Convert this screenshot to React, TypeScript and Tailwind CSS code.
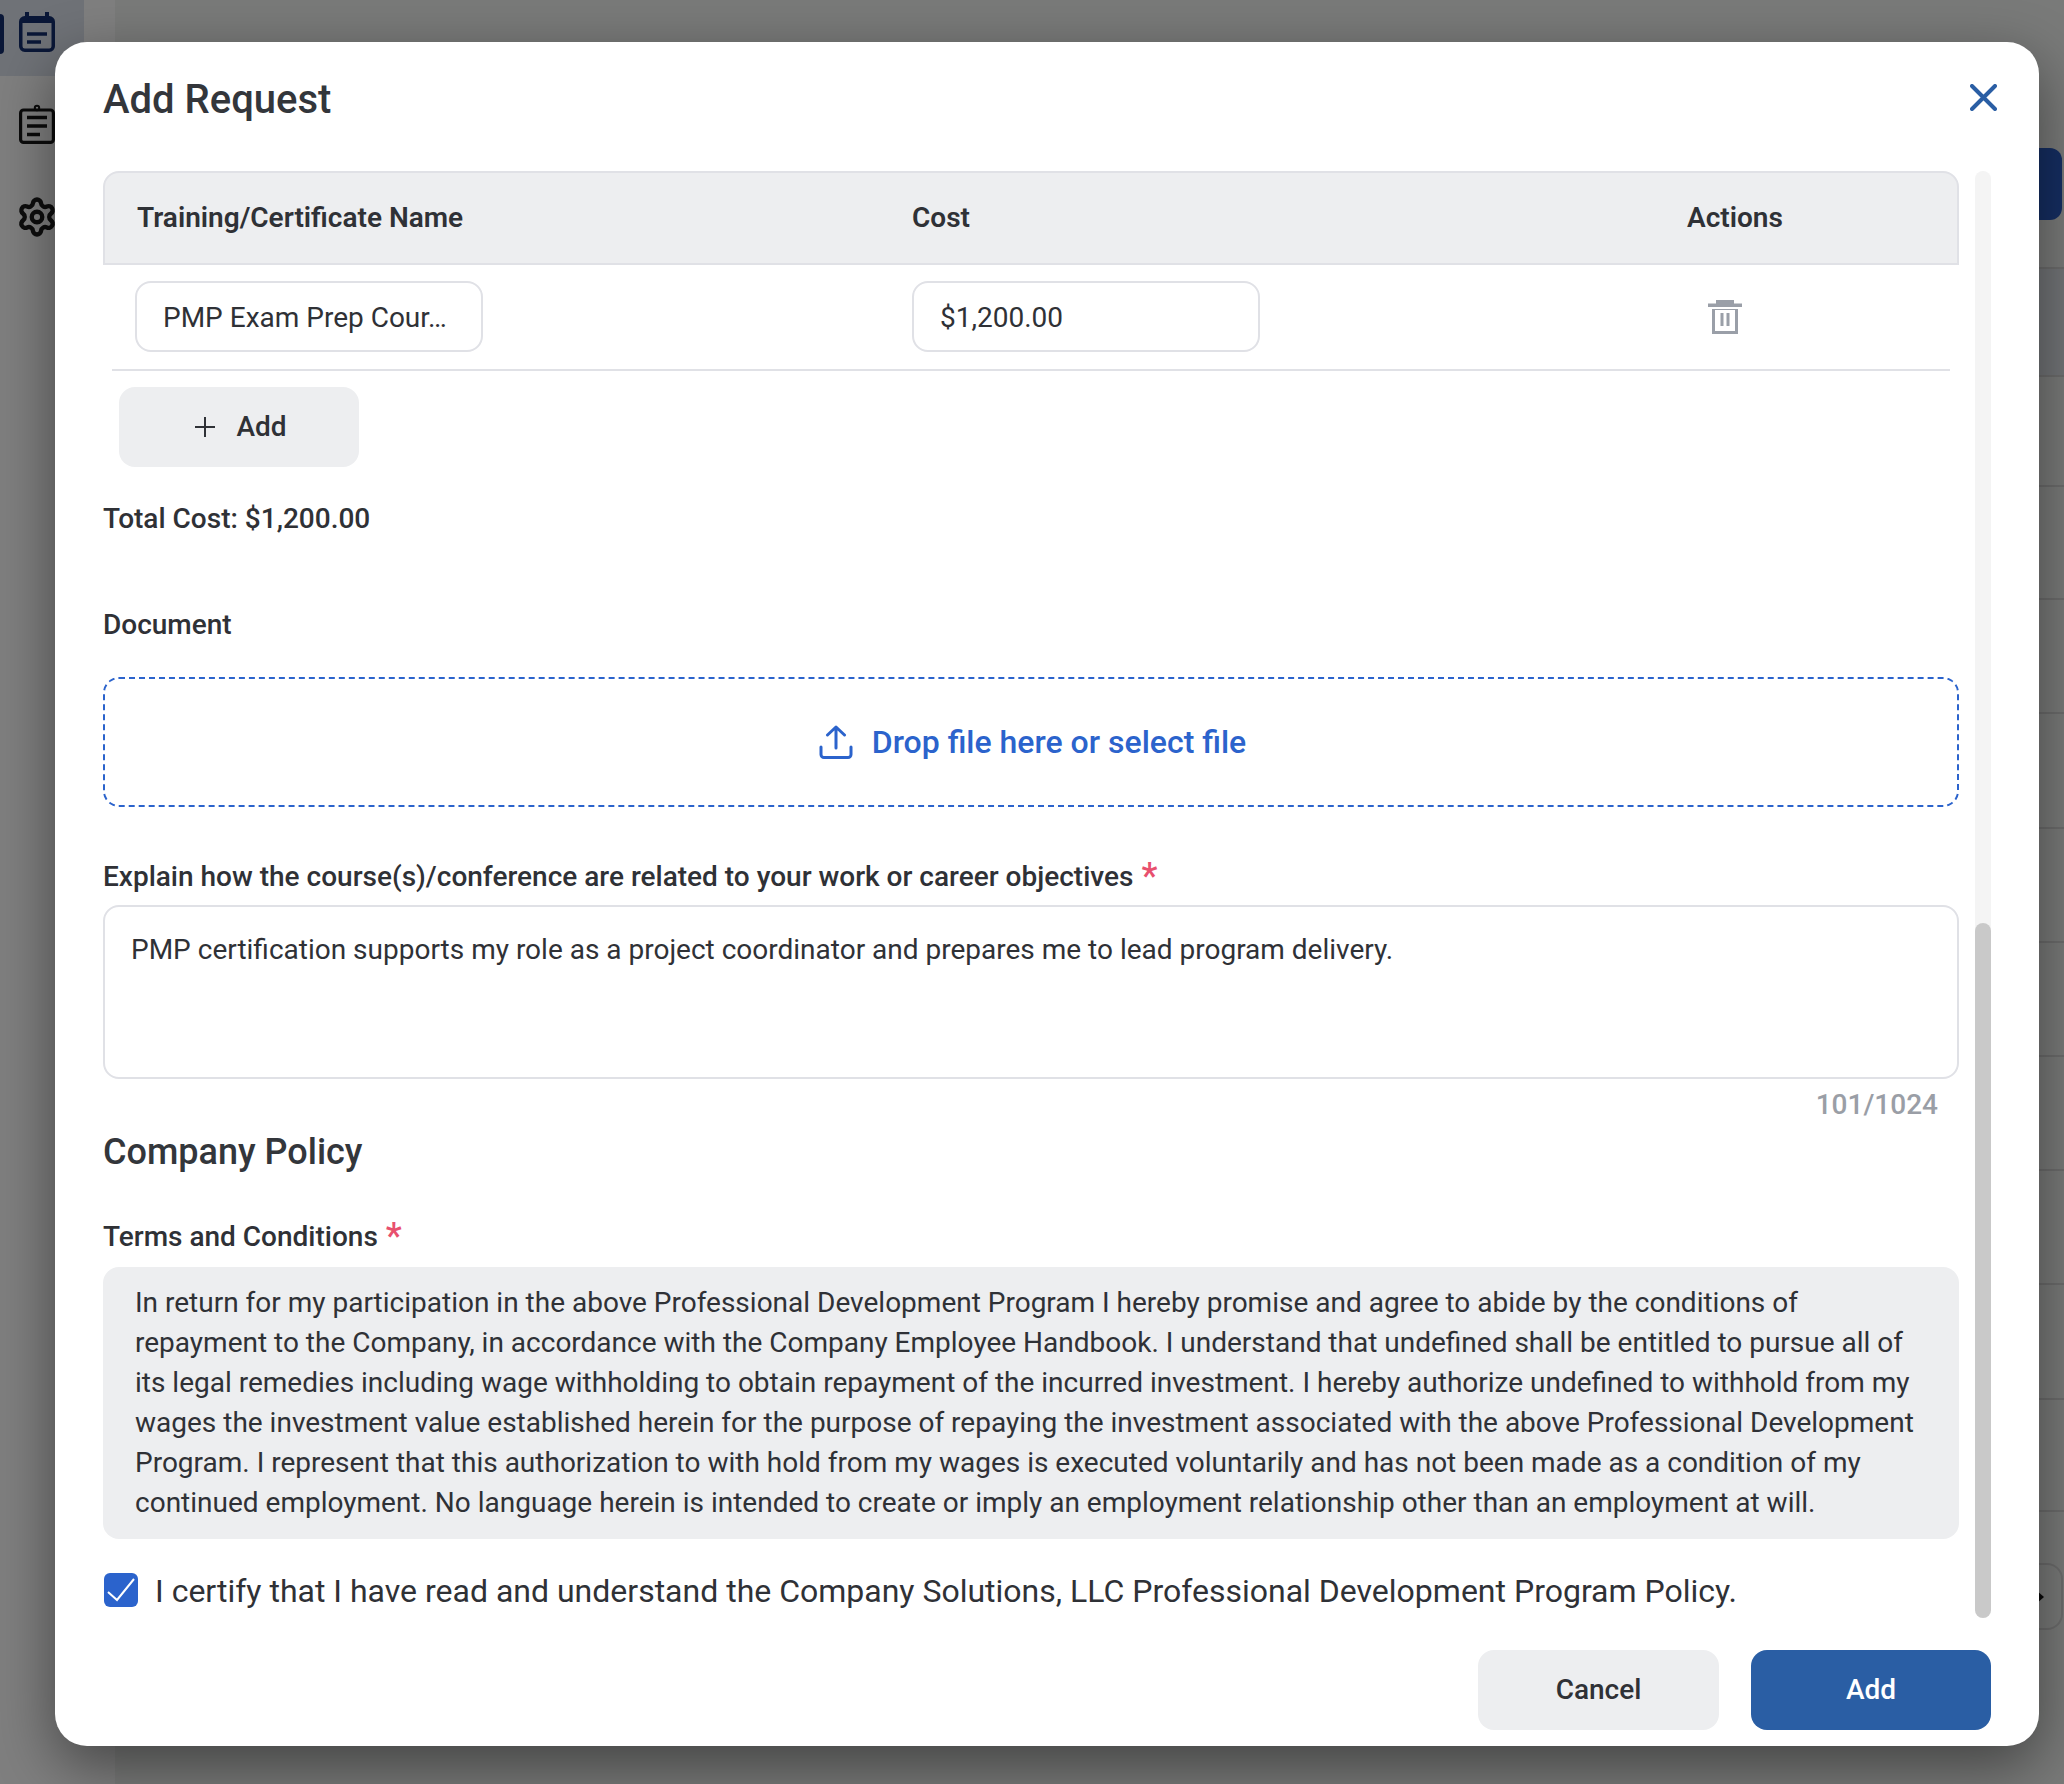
import { Settings } from "lucide-react";

const TERMS =
  "In return for my participation in the above Professional Development Program I hereby promise and agree to abide by the conditions of repayment to the Company, in accordance with the Company Employee Handbook. I understand that undefined shall be entitled to pursue all of its legal remedies including wage withholding to obtain repayment of the incurred investment. I hereby authorize undefined to withhold from my wages the investment value established herein for the purpose of repaying the investment associated with the above Professional Development Program. I represent that this authorization to with hold from my wages is executed voluntarily and has not been made as a condition of my continued employment. No language herein is intended to create or imply an employment relationship other than an employment at will.";

const ROW_HEIGHTS = [108, 110, 113, 114, 115, 114, 114, 114, 114, 115, 112];

function CalendarIcon() {
  return (
    <svg width="36" height="40" viewBox="0 0 36 40" fill="none" stroke="#152f6e" strokeWidth="3.5">
      <rect x="1.75" y="5.75" width="32.5" height="32.5" rx="4" />
      <path d="M2 8.5h32" strokeWidth="5" />
      <path d="M8 0v5M28 0v5" strokeWidth="4" />
      <path d="M8 22h20M8 30h14" />
    </svg>
  );
}

function ClipboardIcon() {
  return (
    <svg width="36" height="40" viewBox="0 0 36 40" fill="none" stroke="#161616" strokeWidth="3.2">
      <rect x="1.6" y="6" width="32.8" height="32.4" rx="3" />
      <circle cx="18" cy="4" r="2.2" strokeWidth="2" />
      <path d="M8 13.5h20M8 22h20M8 30.5h13" strokeWidth="3.4" />
    </svg>
  );
}

function TrashIcon() {
  return (
    <svg width="34" height="34" viewBox="0 0 34 34" fill="#9a9fa8">
      <path d="M8 0h18v3.5h8V7H0V3.5h8z" />
      <path d="M4 9h26v25H4zM7 10v21h20V10z" fillRule="evenodd" />
      <path d="M12.5 13h3v13h-3zM18.5 13h3v13h-3z" />
    </svg>
  );
}

function UploadIcon() {
  return (
    <svg width="34" height="34" viewBox="0 0 34 34" fill="none" stroke="#2b63cc" strokeWidth="3" strokeLinecap="round" strokeLinejoin="round">
      <path d="M2 22v7.5a3 3 0 0 0 3 3h24a3 3 0 0 0 3-3V22" />
      <path d="M17 23V2M8.5 10 17 2l8.5 8" />
    </svg>
  );
}

function Required() {
  return <span className="ml-[8px] inline-block h-[32px] align-top text-[36px] font-medium leading-[30px] text-[#e8506e]">*</span>;
}

function TableHeader() {
  return (
    <div className="grid h-[94px] grid-cols-[807px_775px_1fr] items-center rounded-t-[16px] border-2 border-[#e0e1e6] bg-[#edeef0] text-[28px] font-semibold text-[#2f3136]">
      <div className="pl-[32px]">Training/Certificate Name</div>
      <div>Cost</div>
      <div>Actions</div>
    </div>
  );
}

function TableRow() {
  return (
    <div className="mx-[9px] grid grid-cols-[800px_775px_1fr] items-center border-b-2 border-[#e0e1e6] pb-[17px] pt-[16px]">
      <div className="pl-[23px]">
        <div className="flex h-[71px] w-[348px] items-center rounded-[16px] border-2 border-[#e0e1e6] px-[26px] pt-[2px] text-[28px] text-[#2f3136]">
          PMP Exam Prep Cour…
        </div>
      </div>
      <div>
        <div className="flex h-[71px] w-[348px] items-center rounded-[16px] border-2 border-[#e0e1e6] px-[26px] pt-[2px] text-[28px] text-[#2f3136]">
          $1,200.00
        </div>
      </div>
      <div className="pl-[21px]">
        <TrashIcon />
      </div>
    </div>
  );
}

export default function App() {
  return (
    <div className="relative flex h-[1784px] w-[2064px] overflow-hidden bg-white font-['Roboto','Liberation_Sans',sans-serif]">
      {/* page behind the dialog */}
      <aside className="flex w-[115px] shrink-0 flex-col bg-white">
        <div className="flex h-[76px] w-[84px] items-start bg-[#dfe5ee]">
          <div className="mt-[14px] h-[40px] w-[4px] rounded-r-[4px] bg-[#152f6e]" />
          <div className="ml-[15px] mt-[12px]">
            <CalendarIcon />
          </div>
        </div>
        <div className="ml-[19px] mt-[28px]">
          <ClipboardIcon />
        </div>
        <div className="ml-[16px] mt-[52px]">
          <Settings size={42} strokeWidth={2.5} color="#1a1a1a" />
        </div>
      </aside>
      <main className="flex flex-1 flex-col bg-[#f2f4f2]">
        <div className="h-[148px]" />
        <div className="flex justify-end pr-[2px]">
          <div className="h-[72px] w-[200px] rounded-[12px] bg-[#2a5cc4]" />
        </div>
        <div className="h-[49px] border-b-2 border-[#d8d8d8]" />
        <div className="bg-[#e4e8ee]">
          {ROW_HEIGHTS.slice(0, 1).map((h, i) => (
            <div key={i} style={{ height: h }} className="border-b-2 border-[#d8d8d8]" />
          ))}
        </div>
        {ROW_HEIGHTS.slice(1).map((h, i) => (
          <div key={i} style={{ height: h }} className="border-b-2 border-[#d8d8d8]" />
        ))}
        <div className="mt-[51px] flex justify-end pr-[1px]">
          <div className="flex h-[67px] w-[200px] items-center justify-end rounded-[16px] border-2 border-[#d8d8d8] pr-[17px]">
            <svg width="8" height="14" viewBox="0 0 8 14" fill="#111">
              <path d="M0 0l8 7-8 7z" />
            </svg>
          </div>
        </div>
      </main>

      {/* overlay */}
      <div className="absolute inset-0 bg-black/50">
        <div className="absolute left-[55px] top-[42px] flex h-[1704px] w-[1984px] flex-col rounded-[32px] bg-white text-[#2f3136] shadow-[0_20px_60px_rgba(0,0,0,0.45)]">
          <header className="flex h-[129px] shrink-0 justify-between pl-[48px] pr-[42px] pt-[34px]">
            <h1 className="text-[40px] font-medium leading-[48px] text-[#33363b]">Add Request</h1>
            <button className="mt-[8px] h-[27px] w-[27px]" aria-label="Close">
              <svg width="27" height="27" viewBox="0 0 27 27" fill="none" stroke="#2a5ea4" strokeWidth="4" strokeLinecap="round">
                <path d="M2 2l23 23M25 2 2 25" />
              </svg>
            </button>
          </header>

          <div className="flex h-[1447px] shrink-0 gap-[16px] pl-[48px]">
            <div className="w-[1856px] shrink-0">
              <TableHeader />
              <TableRow />
              <button className="ml-[16px] mt-[16px] flex h-[80px] w-[240px] items-center justify-center gap-[21px] rounded-[16px] bg-[#edeef0] pl-[4px] text-[28px] font-medium">
                <svg width="20" height="20" viewBox="0 0 20 20" stroke="#2f3136" strokeWidth="2">
                  <path d="M10 0v20M0 10h20" />
                </svg>
                Add
              </button>
              <div className="mt-[36px] text-[28px] font-medium leading-[32px]">Total Cost: $1,200.00</div>
              <div className="mt-[74px] text-[28px] font-medium leading-[32px]">Document</div>
              <div className="mt-[36px] flex h-[130px] items-center justify-center gap-[19px] rounded-[16px] border-2 border-dashed border-[#2b63cc] pl-[3px] text-[32px] font-medium text-[#2b63cc]">
                <UploadIcon />
                Drop file here or select file
              </div>
              <div className="mt-[54px] text-[28px] font-medium leading-[32px]">
                Explain how the course(s)/conference are related to your work or career objectives
                <Required />
              </div>
              <div className="mt-[12px] h-[174px] rounded-[16px] border-2 border-[#e0e1e6] px-[26px] pt-[25px] text-[28px] leading-[36px]">
                PMP certification supports my role as a project coordinator and prepares me to lead program delivery.
              </div>
              <div className="mt-[10px] pr-[21px] text-right text-[28px] font-medium leading-[32px] text-[#9a9ea6]">101/1024</div>
              <h2 className="mt-[11px] text-[36px] font-medium leading-[40px] text-[#33363b]">Company Policy</h2>
              <div className="mt-[49px] text-[28px] font-medium leading-[32px]">
                Terms and Conditions
                <Required />
              </div>
              <div className="mt-[14px] h-[272px] rounded-[16px] bg-[#edeef0] pb-[15px] pl-[32px] pr-[31px] pt-[16px] text-[28px] leading-[40px]">{TERMS}</div>
              <div className="ml-[1px] mt-[33px] flex items-center gap-[17px]">
                <div className="h-[34px] w-[34px] shrink-0 rounded-[6px] bg-[#2b63cc]">
                  <svg width="34" height="34" viewBox="0 0 34 34" fill="none" stroke="white" strokeWidth="2">
                    <path d="M4 19l9 8L30 6" />
                  </svg>
                </div>
                <span className="pt-[2px] text-[32px] leading-[34px]">
                  I certify that I have read and understand the Company Solutions, LLC Professional Development Program Policy.
                </span>
              </div>
            </div>
            <div className="flex w-[16px] shrink-0 flex-col rounded-full bg-[#f4f4f4]">
              <div className="h-[752px] shrink-0" />
              <div className="flex-1 rounded-full bg-[#c9c9c9]" />
            </div>
          </div>

          <footer className="flex justify-end gap-[32px] pr-[48px] pt-[32px]">
            <button className="h-[80px] w-[241px] rounded-[16px] bg-[#edeef0] text-[28px] font-medium">Cancel</button>
            <button className="h-[80px] w-[240px] rounded-[16px] bg-[#2a5ea4] text-[28px] font-medium text-white">Add</button>
          </footer>
        </div>
      </div>
    </div>
  );
}
